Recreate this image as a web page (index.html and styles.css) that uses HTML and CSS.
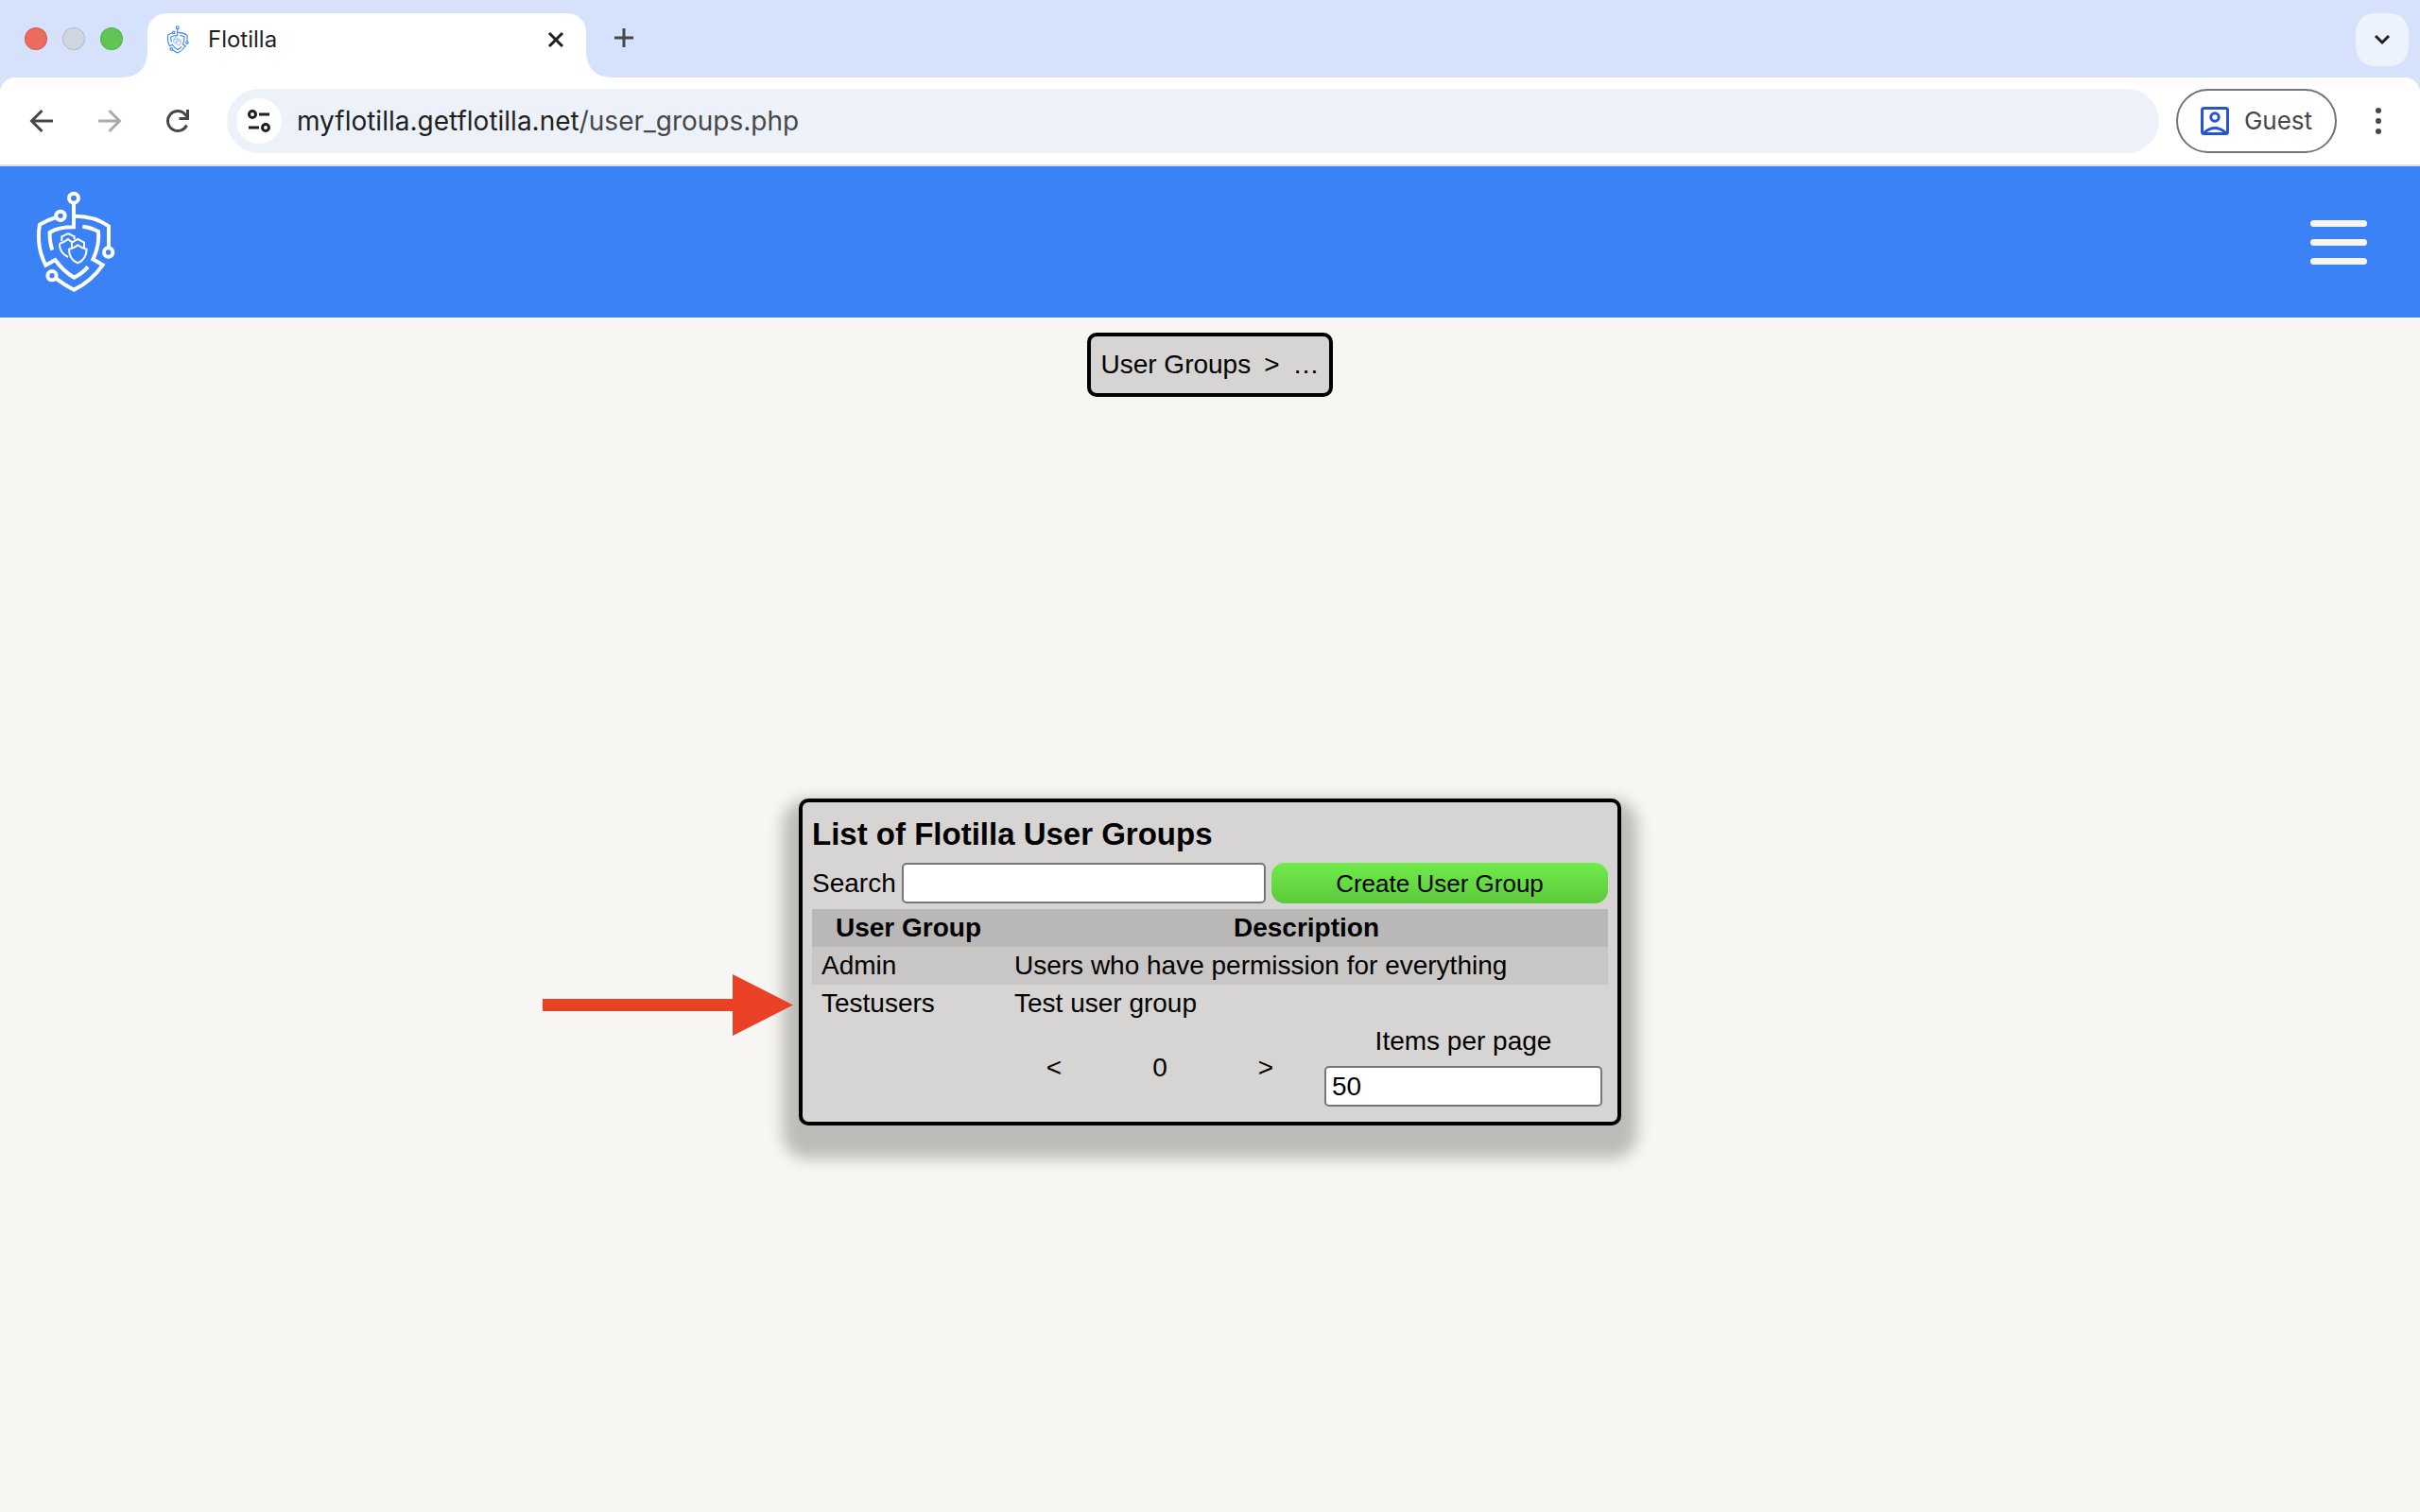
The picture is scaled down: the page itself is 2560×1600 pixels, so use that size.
FILE: index.html
```html
<!DOCTYPE html>
<html lang="en">
<head>
	<meta charset="UTF-8">
	<title>Flotilla</title>
	<link rel="stylesheet" href="styles.css">
</head>
<body>
	<!-- shield logo, used in the tab and in the header -->
	<svg class="defs" aria-hidden="true">
		<symbol id="shield" viewBox="108 96 258 324">
			<g fill="none" stroke="currentColor" stroke-width="12">
				<circle cx="234" cy="119" r="15"/>
				<circle cx="192" cy="175" r="14"/>
				<circle cx="344" cy="291" r="14"/>
				<circle cx="165" cy="365" r="14"/>
				<path d="M234 134V211Q185 211 158 228Q157 258 166 284"/>
				<path d="M179 180Q150 188 126 203Q114 272 145 332L175 315Q202 352 235 371Q260 359 279 337"/>
				<path d="M240 176Q300 176 345 208V277"/>
				<path d="M262 209Q292 213 312 225Q316 270 295 313L326 331Q290 383 235 410Q205 395 176 373"/>
			</g>
			<g fill="none" stroke="currentColor" stroke-width="6">
				<path d="M196 256V241L216 231L236 241V250M189 263Q203 260 216 249Q224 256 230 259M189 263Q188 293 216 306"/>
				<path d="M228 275V260L247 249L267 260V275M219 281Q235 279 247 268Q260 279 275 281Q274 314 247 325Q219 314 219 281Z"/>
			</g>
		</symbol>
	</svg>

	<!-- browser bar -->
	<div class="browser">
		<div class="tabs">
			<div class="lights">
				<span class="light red"></span>
				<span class="light grey"></span>
				<span class="light green"></span>
			</div>
			<div class="tab">
				<svg class="favicon"><use href="#shield"/></svg>
				<span class="tab-name">Flotilla</span>
				<button class="icon-btn" aria-label="Close tab">
					<svg width="18" height="18" viewBox="0 0 18 18"><path d="M2 2L16 16M16 2L2 16" fill="none" stroke="#1f1f1f" stroke-width="3"/></svg>
				</button>
			</div>
			<button class="icon-btn new-tab" aria-label="New tab">
				<svg width="20" height="20" viewBox="0 0 20 20"><path d="M10 0V20M0 10H20" fill="none" stroke="#474747" stroke-width="3"/></svg>
			</button>
			<button class="tab-search" aria-label="Search tabs">
				<svg width="18" height="12" viewBox="0 0 18 12"><path d="M2 2L9 9L16 2" fill="none" stroke="#1f1f1f" stroke-width="3"/></svg>
			</button>
		</div>
		<div class="toolbar">
			<div class="nav-btns">
				<button class="icon-btn" aria-label="Back">
					<svg width="26" height="26" viewBox="0 0 26 26"><path d="M25 13H3M13.500 2L2.500 13L13.500 24" fill="none" stroke="#474747" stroke-width="3"/></svg>
				</button>
				<button class="icon-btn" aria-label="Forward">
					<svg width="26" height="26" viewBox="0 0 26 26"><path d="M1 13H23M12.500 2L23.500 13L12.500 24" fill="none" stroke="#ababab" stroke-width="3"/></svg>
				</button>
				<button class="icon-btn" aria-label="Reload">
					<svg width="26" height="26" viewBox="0 0 26 26"><path d="M22.500 17.500A10.500 10.500 0 1 1 21 6.200L23.500 9M23.500 1V10.500H14.500" fill="none" stroke="#474747" stroke-width="3"/></svg>
				</button>
			</div>
			<div class="address">
				<button class="site-info" aria-label="Site information">
					<svg width="26" height="24" viewBox="0 0 26 24"><g fill="none" stroke="#1f1f1f" stroke-width="3"><circle cx="6" cy="5" r="3.500"/><path d="M13 5H24M2 19H13"/><circle cx="20" cy="19" r="3.500"/></g></svg>
				</button>
				<span class="url">myflotilla.getflotilla.net<span class="path">/user_groups.php</span></span>
			</div>
			<button class="guest">
				<svg width="30" height="30" viewBox="0 0 30 30"><g fill="none" stroke="#2556ce" stroke-width="3"><rect x="1.500" y="1.500" width="27" height="27" rx="2"/><circle cx="15" cy="11" r="4.200"/><path d="M3 28Q15 17 27 28"/></g></svg>
				Guest
			</button>
			<button class="icon-btn" aria-label="Menu">
				<svg width="6" height="28" viewBox="0 0 6 28" fill="#474747"><circle cx="3" cy="3" r="3"/><circle cx="3" cy="14" r="3"/><circle cx="3" cy="25" r="3"/></svg>
			</button>
		</div>
	</div>

	<!-- header -->
	<header class="header">
		<svg class="logo"><use href="#shield"/></svg>
		<button class="burger" aria-label="Open menu">
			<span></span>
			<span></span>
			<span></span>
		</button>
	</header>

	<nav class="crumbs">
		<a href="#">User Groups</a>
		<span>&gt;</span>
		<span>…</span>
	</nav>

	<main class="main">
		<div class="card">
			<h1>List of Flotilla User Groups</h1>
			<div class="search">
				<label for="search">Search</label>
				<input type="text" id="search">
				<button class="create">Create User Group</button>
			</div>
			<table class="groups">
				<thead>
					<tr>
						<th class="name">User Group</th>
						<th>Description</th>
					</tr>
				</thead>
				<tbody>
					<tr class="odd">
						<td>Admin</td>
						<td>Users who have permission for everything</td>
					</tr>
					<tr>
						<td>Testusers</td>
						<td>Test user group</td>
					</tr>
				</tbody>
			</table>
			<div class="pager">
				<button aria-label="Previous page">&lt;</button>
				<span>0</span>
				<button aria-label="Next page">&gt;</button>
				<div class="per-page">
					<label for="items">Items per page</label>
					<input type="text" id="items" value="50">
				</div>
			</div>
			<!-- arrow pointing at the Testusers row -->
			<svg class="arrow" viewBox="0 0 265 65"><path d="M0 26H201V0L265 32.500L201 65V39H0Z" fill="#ea4025"/></svg>
		</div>
	</main>
</body>
</html>
```

FILE: styles.css
```css
*{margin:0;padding:0;box-sizing:border-box;}
body {
	min-height: 100vh;
	display: flex;
	flex-direction: column;
	background: #f7f6f2;
	color: #000;
	font: 28px/40px "Liberation Sans", Arial, sans-serif;
}
button {
	border: none;
	background: none;
	color: inherit;
	font: inherit;
}
svg {
	display: block;
}
.defs {
	position: absolute;
	width: 0;
	height: 0;
}

/* browser bar */
.browser {
	background: #d6e1fc;
	border-bottom: 2px solid #dfe1e3;
	font-family: Inter, sans-serif;
	font-size: 26px;
}
.tabs {
	height: 82px;
	padding: 14px 12px 0 26px;
	display: flex;
}
.lights {
	width: 130px;
	height: 54px;
	display: flex;
	align-items: center;
	gap: 16px;
}
.light {
	width: 24px;
	height: 24px;
	border-radius: 50%;
	border: 1px solid rgba(0,0,0,.12);
}
.red {
	background: #ed6a5e;
}
.grey {
	background: #d0d5e2;
}
.green {
	background: #61c554;
}
.tab {
	position: relative;
	width: 464px;
	height: 68px;
	padding: 0 14px 12px 20px;
	display: flex;
	align-items: center;
	background: #fff;
	border-radius: 20px 20px 0 0;
}
/* curved feet of the tab */
.tab:before,
.tab:after {
	content: "";
	position: absolute;
	bottom: 0;
	width: 24px;
	height: 24px;
}
.tab:before {
	right: 100%;
	background: radial-gradient(circle at 0 0, transparent 23px, #fff 24px);
}
.tab:after {
	left: 100%;
	background: radial-gradient(circle at 100% 0, transparent 23px, #fff 24px);
}
.favicon {
	width: 24px;
	height: 30px;
	color: #3b82f6;
}
.tab-name {
	flex: 1;
	margin-left: 20px;
	color: #1f1f1f;
	font-size: 24px;
}
.icon-btn {
	width: 36px;
	height: 36px;
	display: flex;
	align-items: center;
	justify-content: center;
}
.new-tab {
	margin: 8px 0 0 22px;
}
.tab-search {
	width: 56px;
	height: 56px;
	margin-left: auto;
	display: flex;
	align-items: center;
	justify-content: center;
	border-radius: 20px;
	background: #ecf3fd;
}
.toolbar {
	height: 92px;
	padding: 0 26px;
	display: flex;
	align-items: center;
	background: #fff;
	border-radius: 16px 16px 0 0;
}
.nav-btns {
	display: flex;
	gap: 36px;
}
.address {
	flex: 1;
	height: 68px;
	margin: 0 18px 0 34px;
	padding: 0 10px;
	display: flex;
	align-items: center;
	gap: 16px;
	border-radius: 34px;
	background: #edf2fa;
}
.site-info {
	width: 48px;
	height: 48px;
	display: flex;
	align-items: center;
	justify-content: center;
	border-radius: 50%;
	background: #fff;
}
.url {
	color: #1f1f1f;
	font-size: 28px;
}
.path {
	color: #474747;
}
.guest {
	width: 170px;
	height: 68px;
	margin-right: 26px;
	display: flex;
	align-items: center;
	justify-content: center;
	gap: 16px;
	border: 2px solid #747474;
	border-radius: 34px;
	color: #474747;
}

/* header */
.header {
	height: 160px;
	padding: 0 56px 0 36px;
	display: flex;
	align-items: center;
	justify-content: space-between;
	background: #3b82f6;
}
.logo {
	width: 86px;
	height: 108px;
	color: #fff;
}
.burger {
	width: 60px;
	display: flex;
	flex-direction: column;
	gap: 13px;
}
.burger span {
	height: 7px;
	border-radius: 4px;
	background: #f7f6f2;
}

.crumbs {
	align-self: center;
	margin: 16px 0;
	padding: 10px;
	display: flex;
	gap: 14px;
	border: 4px solid #000;
	border-radius: 10px;
	background: #d6d5d3;
}
.crumbs a {
	color: inherit;
	text-decoration: none;
}

/* list of groups */
.main {
	flex: 1;
	display: flex;
	align-items: center;
	justify-content: center;
}
.card {
	position: relative;
	width: 870px;
	padding: 10px;
	border: 4px solid #000;
	border-radius: 10px;
	background: #d6d5d3;
	box-shadow: 0 18px 16px 17px rgba(0,0,0,.24);
}
h1 {
	font-size: 33px;
	line-height: 48px;
}
input {
	height: 43px;
	padding: 0 6px;
	border: 2px solid #767676;
	border-radius: 5px;
	background: #fff;
	color: #000;
	font: inherit;
}
.search {
	margin: 6px 0;
	display: flex;
	align-items: center;
	gap: 6px;
}
.search input {
	flex: 1;
	min-width: 0;
}
.create {
	width: 356px;
	height: 43px;
	border-radius: 14px;
	background: linear-gradient(#70ec49, #5dc93c);
	font-size: 26px;
}
.groups {
	width: 100%;
	border-collapse: collapse;
}
.groups td,
.groups th {
	padding: 0 10px;
}
.groups .name {
	width: 204px;
}
.groups thead {
	background: #b9b8b6;
}
.odd {
	background: #c8c7c5;
}
.pager {
	display: grid;
	grid-template-columns: repeat(3, 112px) 306px;
	justify-content: end;
	align-items: center;
	text-align: center;
}
.per-page {
	padding: 0 6px 6px;
	display: flex;
	flex-direction: column;
	gap: 6px;
}
.per-page input {
	width: 100%;
}
.arrow {
	position: absolute;
	top: 182px;
	left: -275px;
	width: 265px;
	height: 65px;
}
```
